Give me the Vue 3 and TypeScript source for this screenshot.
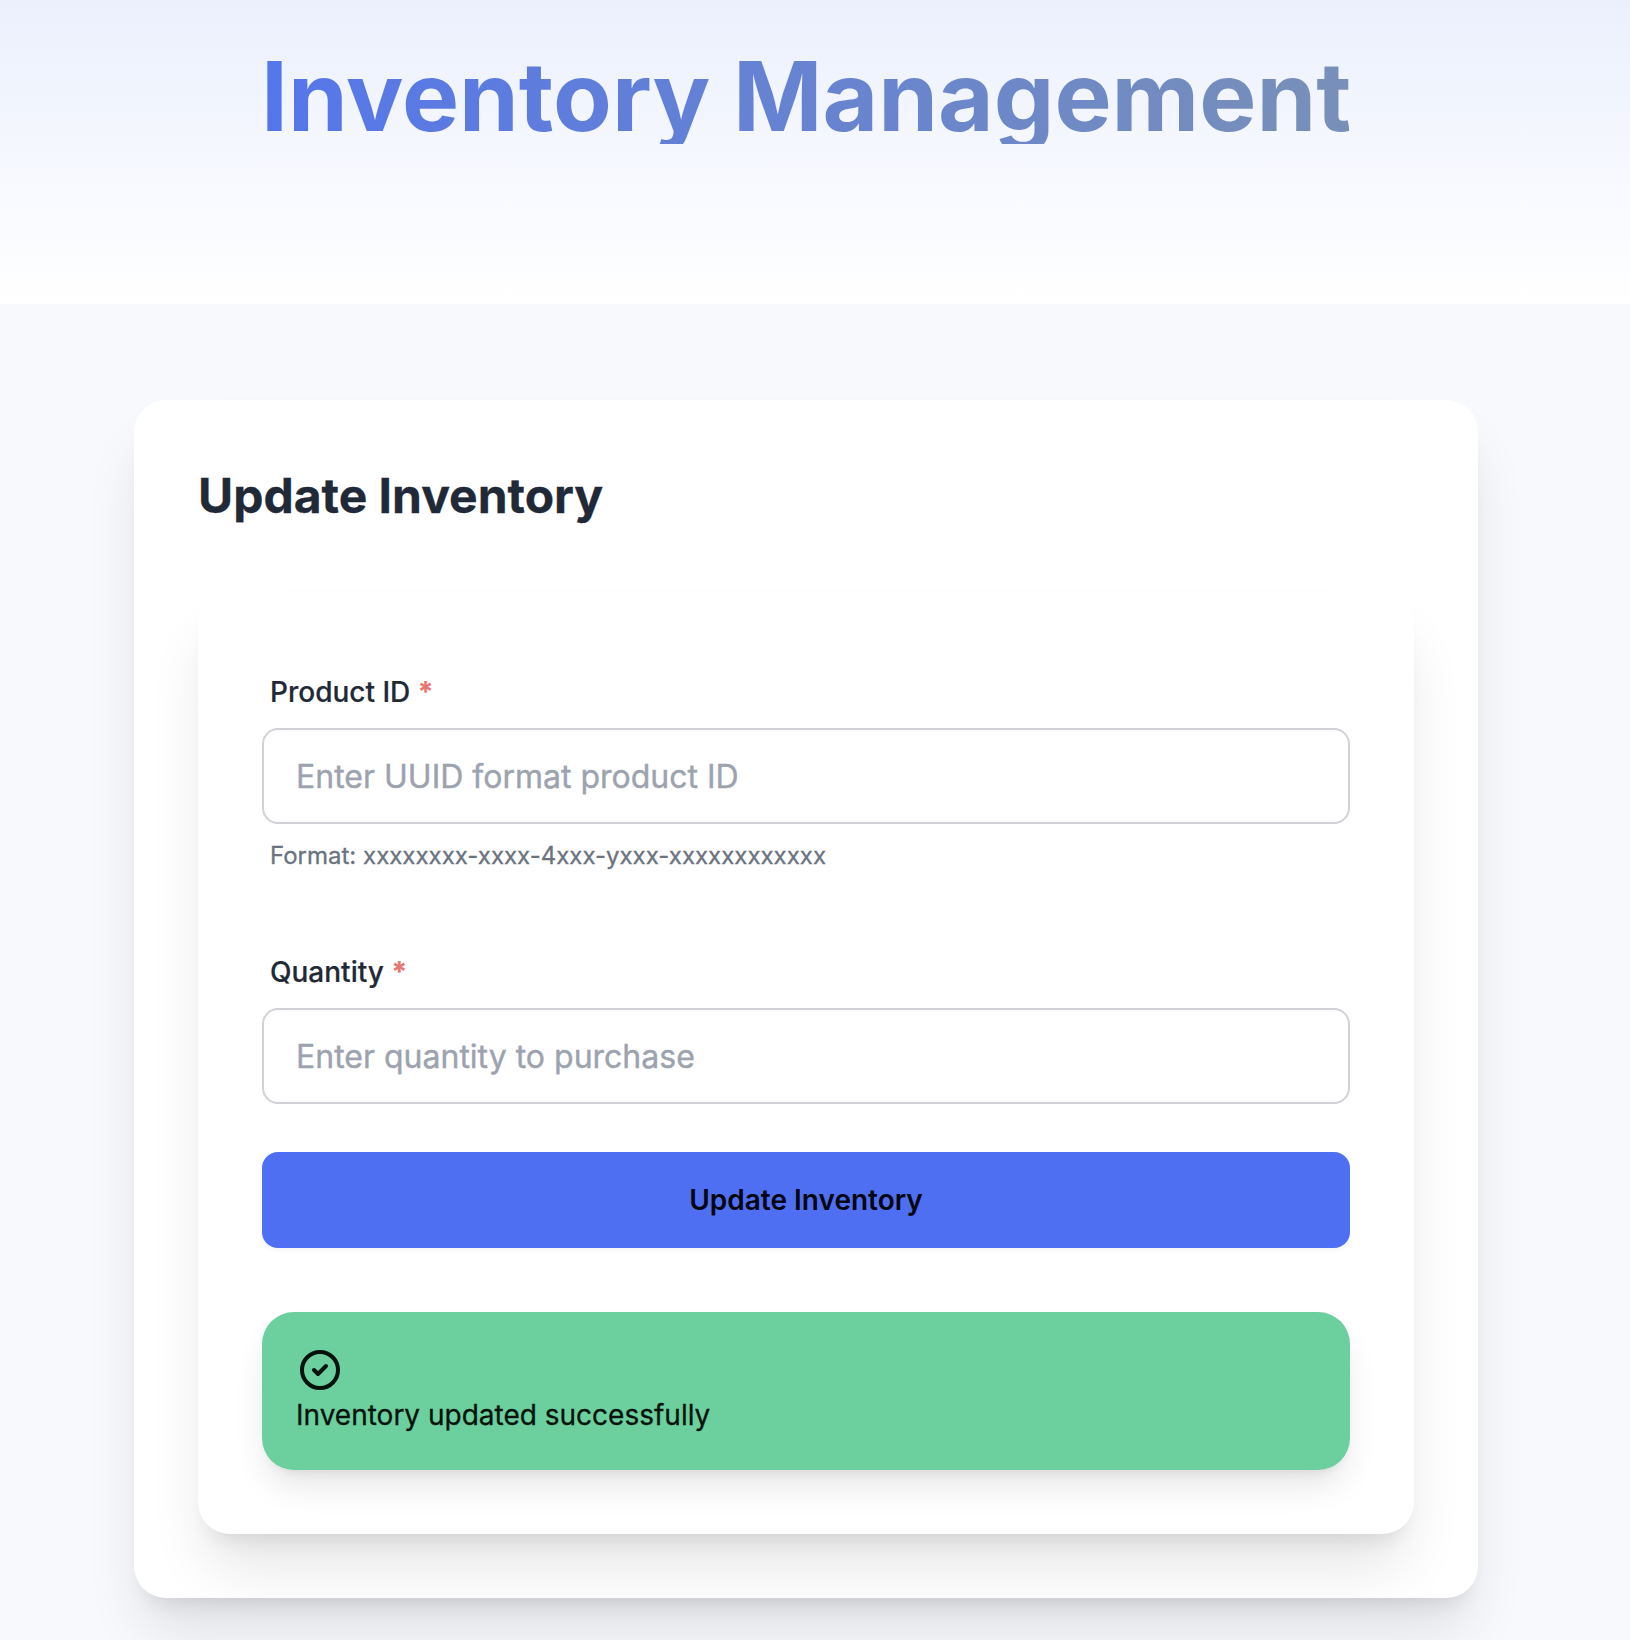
<script setup lang="ts">
import { ref } from 'vue'

interface Field {
  id: string
  label: string
  placeholder: string
  hint?: string
}

const fields: Field[] = [
  { id: 'product', label: 'Product ID', placeholder: 'Enter UUID format product ID', hint: 'Format: xxxxxxxx-xxxx-4xxx-yxxx-xxxxxxxxxxxx' },
  { id: 'quantity', label: 'Quantity', placeholder: 'Enter quantity to purchase' },
]
const values = ref<Record<string, string>>({ product: '', quantity: '' })
const message = ref('Inventory updated successfully')
</script>

<template>
  <div class="page">
    <header class="hero"><h1>Inventory Management</h1></header>
    <main class="card">
      <h2>Update Inventory</h2>
      <form class="panel" @submit.prevent>
        <div v-for="f in fields" :key="f.id" class="field">
          <label :for="f.id">{{ f.label }} <span class="req">*</span></label>
          <input :id="f.id" v-model="values[f.id]" type="text" :placeholder="f.placeholder" />
          <p v-if="f.hint" class="hint">{{ f.hint }}</p>
        </div>
        <button type="submit">Update Inventory</button>
        <div class="alert" role="status">
          <svg viewBox="0 0 24 24" fill="none" stroke="currentColor" stroke-width="2" stroke-linecap="round" stroke-linejoin="round">
            <path d="M9 12l2 2 4-4m6 2a9 9 0 11-18 0 9 9 0 0118 0z" />
          </svg>
          <span>{{ message }}</span>
        </div>
      </form>
    </main>
  </div>
</template>

<style>
html, body { margin: 0; background: #f8f9fd; }
</style>

<style scoped>
* { box-sizing: border-box; }
.page { height: 1640px; overflow: hidden; background: #f8f9fd; font-family: Inter, sans-serif; color: #1f2937; }
.hero { height: 304px; padding-top: 48px; background: linear-gradient(to bottom, #ebf0fd, #fff); display: flex; justify-content: center; align-items: flex-start; padding-right: 20px; }
h1 { margin: 0; width: 1088px; height: 96px; font-size: 96px; line-height: 96px; font-weight: 700; text-align: center; white-space: nowrap; color: transparent; background: linear-gradient(to right, #5576ea, #7890b8); -webkit-background-clip: text; background-clip: text; }
.card { margin: 96px 0 0 134px; width: 1344px; height: 1198px; padding: 64px; border-radius: 32px; background: #fff; box-shadow: 0 40px 60px -10px rgba(0,0,0,.11), 0 16px 20px -12px rgba(0,0,0,.1); }
h2 { margin: 0 0 64px; font-size: 48px; line-height: 64px; font-weight: 700; -webkit-text-stroke: .3px currentColor; }
.panel { height: 942px; padding: 72px 64px 64px; border-radius: 32px; background: #fff; box-shadow: 0 40px 60px -10px rgba(0,0,0,.11), 0 16px 20px -12px rgba(0,0,0,.1); }
.field { height: 280px; display: flex; flex-direction: column; }
.field:nth-child(2) { height: 208px; }
label { padding: 8px; font-size: 28px; line-height: 40px; font-weight: 500; margin-bottom: 8px; -webkit-text-stroke: .2px currentColor; }
.req { color: #e8756f; font-weight: 700; }
input { width: 100%; height: 96px; padding: 0 32px; border: 2px solid #d1d2d7; border-radius: 16px; background: #fff; font: 400 32px/48px Inter, sans-serif; color: #1f2937; outline: none; }
input::placeholder { color: #9ca3af; opacity: 1; -webkit-text-stroke: .4px #9ca3af; }
.hint { margin: 16px 8px 0; font-size: 24px; line-height: 32px; color: #6b7280; -webkit-text-stroke: .3px currentColor; }
button { display: block; width: 100%; height: 96px; border: 0; border-radius: 16px; background: #4e6ff2; color: #03050f; font: 600 28px/40px Inter, sans-serif; box-shadow: 0 2px 4px rgba(0,0,0,.05); }
.alert { margin-top: 64px; height: 158px; padding: 34px; border-radius: 32px; background: #6bd09e; color: #04120c; font-size: 28px; line-height: 42px; box-shadow: 0 20px 34px -6px rgba(0,0,0,.11), 0 8px 12px -8px rgba(0,0,0,.1); }
.alert svg { display: block; width: 48px; height: 48px; }
.alert span { display: block; -webkit-text-stroke: .3px currentColor; }
</style>
